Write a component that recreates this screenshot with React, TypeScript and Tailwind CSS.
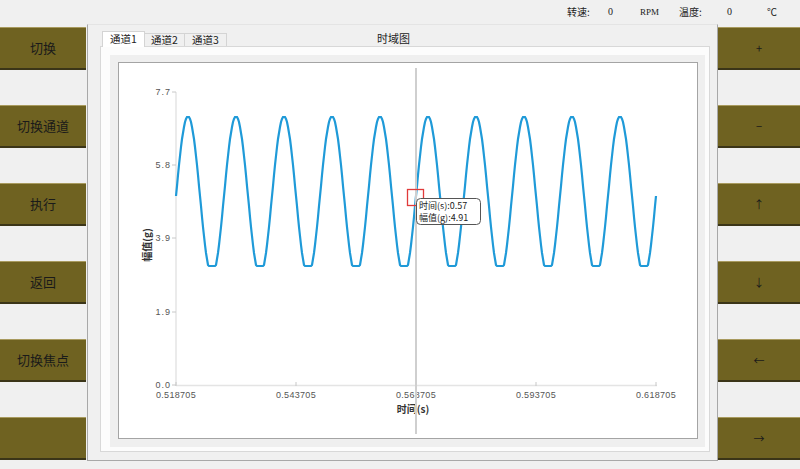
import React from "react";

const OX = 119; // chart svg origin in page coords
const OY = 63;

const LEFT_BUTTONS = ["切换", "切换通道", "执行", "返回", "切换焦点", ""];
const RIGHT_BUTTONS = ["+", "−", "↑", "↓", "←", "→"];

const Y_TICKS = [
  { label: "7.7", y: 92 },
  { label: "5.8", y: 165 },
  { label: "3.9", y: 238 },
  { label: "1.9", y: 312 },
  { label: "0.0", y: 385 },
];

const X_TICKS = [
  { label: "0.518705", x: 176 },
  { label: "0.543705", x: 296 },
  { label: "0.568705", x: 416 },
  { label: "0.593705", x: 536 },
  { label: "0.618705", x: 656 },
];

function wavePoints() {
  const pts: string[] = [];
  for (let x = 176; x <= 656; x += 1) {
    let y = 196 - 80 * Math.sin((2 * Math.PI * (x - 176)) / 48);
    if (y > 266) y = 266;
    if (y < 117) y = 117;
    pts.push(`${x - OX},${Math.round(y) - OY}`);
  }
  return pts.join(" ");
}

function OliveButton({ label, small }: { label: string; small?: boolean }) {
  return (
    <div
      className={`h-[43px] flex items-center justify-center bg-[#6f6221] border-t border-t-[#a89a5e] border-b-2 border-b-[#3b3518] text-[#1a1a1a] ${
        small ? "text-[11px]" : "text-[13px]"
      }`}
    >
      {label}
    </div>
  );
}

function Chart() {
  const t = (x: number) => x - OX;
  const u = (y: number) => y - OY;
  return (
    <svg width={578} height={375} className="block">
      {/* axes */}
      <line x1={t(176)} y1={u(92)} x2={t(176)} y2={u(386)} stroke="#e4e4e4" strokeWidth={1.5} />
      <line x1={t(176)} y1={u(385.5)} x2={t(657)} y2={u(385.5)} stroke="#e4e4e4" strokeWidth={1.5} />
      {Y_TICKS.map((tk) => (
        <g key={tk.label}>
          <line x1={t(172)} y1={u(tk.y)} x2={t(176)} y2={u(tk.y)} stroke="#c8c8c8" />
          <text
            x={t(171)}
            y={u(tk.y) + 3}
            textAnchor="end"
            fontSize={9}
            fill="#555"
            letterSpacing={1}
            fontFamily="'Liberation Sans', sans-serif"
          >
            {tk.label}
          </text>
        </g>
      ))}
      {X_TICKS.map((tk) => (
        <g key={tk.label}>
          <line x1={t(tk.x)} y1={u(382)} x2={t(tk.x)} y2={u(386)} stroke="#c8c8c8" />
          <text
            x={t(tk.x)}
            y={u(398)}
            textAnchor="middle"
            fontSize={9}
            fill="#555"
            letterSpacing={0.3}
            fontFamily="'Liberation Sans', sans-serif"
          >
            {tk.label}
          </text>
        </g>
      ))}
      <text
        x={t(413)}
        y={u(413)}
        textAnchor="middle"
        fontSize={10}
        fontWeight={700}
        fill="#333"
        fontFamily="'Noto Sans CJK SC', 'Liberation Sans', sans-serif"
      >
        时间(s)
      </text>
      <text
        transform={`translate(${t(151)},${u(245)}) rotate(-90)`}
        textAnchor="middle"
        fontSize={10}
        fontWeight={700}
        fill="#333"
        fontFamily="'Noto Sans CJK SC', 'Liberation Sans', sans-serif"
      >
        幅值(g)
      </text>
      {/* wave */}
      <polyline points={wavePoints()} fill="none" stroke="#1f9ad8" strokeWidth={2.2} strokeLinejoin="miter" />
      {/* cursor */}
      <line x1={t(416)} y1={u(68)} x2={t(416)} y2={u(434)} stroke="#cfcfcf" strokeWidth={2} />
      <rect x={t(407.5)} y={u(189.5)} width={16} height={16} fill="none" stroke="#e03a3a" strokeWidth={1.3} />
      <rect x={t(416.5)} y={u(198.5)} width={64} height={26} rx={4} fill="#fff" stroke="#555" strokeWidth={1} />
      <text x={t(419)} y={u(209)} fontSize={9} fill="#222" fontFamily="'Noto Sans CJK SC', 'Liberation Sans', sans-serif">
        时间(s):0.57
      </text>
      <text x={t(419)} y={u(220.5)} fontSize={9} fill="#222" fontFamily="'Noto Sans CJK SC', 'Liberation Sans', sans-serif">
        幅值(g):4.91
      </text>
    </svg>
  );
}

export default function App() {
  return (
    <div
      className="w-[800px] h-[469px] bg-[#f0f0f0] overflow-hidden text-[#222]"
      style={{ fontFamily: "'Noto Sans CJK SC', 'Liberation Sans', sans-serif" }}
    >
      {/* status bar */}
      <div className="h-[24px] flex items-center pl-[567px] text-[10px] leading-none">
        <span className="w-[41px]">转速:</span>
        <span className="w-[32px]" style={{ fontFamily: "'Liberation Serif', serif" }}>0</span>
        <span className="w-[39px] text-[9px]" style={{ fontFamily: "'Liberation Serif', serif" }}>RPM</span>
        <span className="w-[48px]">温度:</span>
        <span className="w-[40px]" style={{ fontFamily: "'Liberation Serif', serif" }}>0</span>
        <span>℃</span>
      </div>

      <div className="flex h-[437px]">
        {/* left buttons */}
        <div className="w-[87px] pt-[3px] pr-[1px] flex flex-col gap-[35px]">
          {LEFT_BUTTONS.map((b, i) => (
            <OliveButton key={i} label={b} />
          ))}
        </div>

        {/* main panel */}
        <div className="w-[631px] h-[437px] border border-[#a8a8a8] border-t-[#e4e4e4] bg-[#f0f0f0] pl-[12px] pr-[7px] pt-[6px] pb-[8px] flex flex-col">
          <div className="h-[15px] flex items-end text-[10.5px] leading-none relative">
            <div className="h-[16px] w-[43px] ml-[2px] bg-white border border-b-0 border-[#d4d4d4] flex items-center justify-center relative top-[1px]">
              通道1
            </div>
            <div className="h-[13px] w-[40px] bg-[#f0f0f0] border border-b-0 border-l-0 border-[#d4d4d4] flex items-center justify-center">
              通道2
            </div>
            <div className="h-[13px] w-[42px] bg-[#f0f0f0] border border-b-0 border-l-0 border-[#d4d4d4] flex items-center justify-center">
              通道3
            </div>
            <div className="ml-[150px] self-center text-[11px]">时域图</div>
          </div>
          <div className="flex-1 bg-[#fcfcfc] border border-[#d8d8d8] pl-[9px] pr-[4px] pt-[8px] pb-[4px] flex">
            <div className="flex-1 bg-[#efefef] pl-[8px] pr-[7px] pt-[7px] pb-[8px] flex">
              <div className="flex-1 bg-white border border-[#a4a4a4]">
                <Chart />
              </div>
            </div>
          </div>
        </div>

        {/* right buttons */}
        <div className="w-[82px] pt-[3px] flex flex-col gap-[35px]">
          {RIGHT_BUTTONS.map((b, i) => (
            <OliveButton key={i} label={b} small />
          ))}
        </div>
      </div>
    </div>
  );
}
